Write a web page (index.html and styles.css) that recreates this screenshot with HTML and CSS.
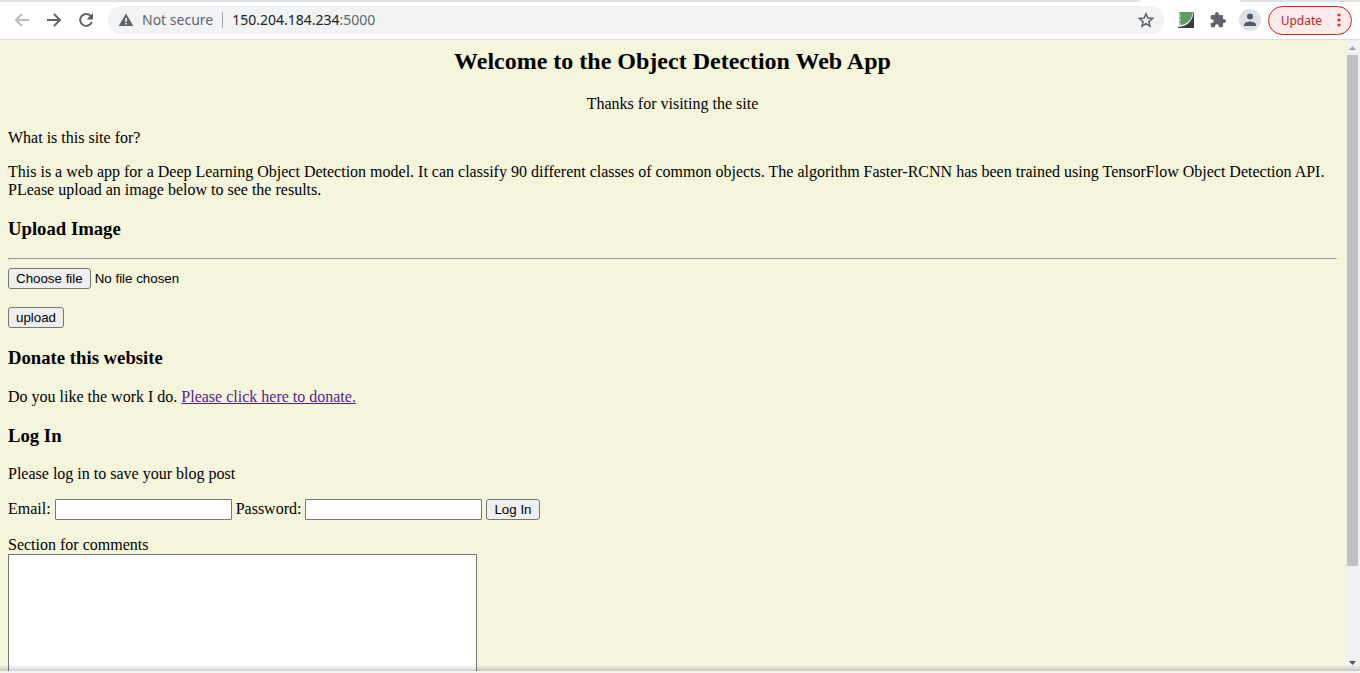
FILE: index.html
```html
<!DOCTYPE html>
<html lang="en">
<head>
<meta charset="utf-8">
<title>Object Detection Web App</title>
<link rel="stylesheet" href="styles.css">
</head>
<body>
<div class="tab-strip"><span class="tab-inactive tab-left"></span><span class="tab-active"></span><span class="tab-inactive tab-right"></span></div>
<header class="toolbar">
  <nav class="nav">
    <button class="icon-btn" aria-label="Back"><svg width="20" height="20" viewBox="0 0 20 20"><path d="M17 10H4M10 4l-6 6 6 6" fill="none" stroke="#babcbe" stroke-width="2"/></svg></button>
    <button class="icon-btn" aria-label="Forward"><svg width="20" height="20" viewBox="0 0 20 20"><path d="M3 10h13M10 4l6 6-6 6" fill="none" stroke="#5f6368" stroke-width="2"/></svg></button>
    <button class="icon-btn" aria-label="Reload"><svg width="20" height="20" viewBox="0 0 20 20"><path d="M15 6.3A6 6 0 1 0 15.800 12" fill="none" stroke="#5f6368" stroke-width="2"/><path d="M17 3v6.500h-6.500z" fill="#5f6368"/></svg></button>
  </nav>
  <div class="address">
    <svg width="16" height="16" viewBox="0 0 16 16"><path d="M8 1.500L15.300 14H.7z" fill="#5f6368"/><path d="M7.200 6h1.700v4H7.200zM7.200 11h1.700v1.600H7.200z" fill="#f1f3f4"/></svg>
    <span class="insecure">Not secure</span>
    <span class="divider"></span>
    <span class="url">150.204.184.234<span class="port">:5000</span></span>
    <button class="icon-btn star" aria-label="Bookmark"><svg width="16" height="16" viewBox="0 0 16 16"><path d="M8 1.800l1.800 4.300 4.700.4-3.550 3.100 1.050 4.600L8 11.750 4 14.200l1.050-4.600L1.500 6.500l4.700-.4z" fill="none" stroke="#5f6368" stroke-width="1.500"/></svg></button>
  </div>
  <button class="icon-btn ext" aria-label="Extension"><svg width="16" height="16" viewBox="0 0 16 16"><path d="M1 0h14C14 8 9 13 1 13.500z" fill="#639b65"/><path d="M0 2h2M0 4h3M0 6h2M0 8h3M0 10h2M0 12h3" stroke="#fff"/><path d="M16 0v16H0v-1C9 14.500 15 9 15.500 0z" fill="#3b3c3e"/></svg></button>
  <button class="icon-btn ext" aria-label="Extensions"><svg width="16" height="16" viewBox="1 1 22 22"><path d="M20.500 11H19V7c0-1.100-.9-2-2-2h-4V3.500a2.500 2.500 0 0 0-5 0V5H4c-1.100 0-2 .9-2 2v3.800h1.500a2.700 2.700 0 0 1 0 5.400H2V20c0 1.100.9 2 2 2h3.800v-1.500a2.700 2.700 0 0 1 5.400 0V22H17c1.100 0 2-.9 2-2v-4h1.500a2.500 2.500 0 0 0 0-5z" fill="#5f6368"/></svg></button>
  <button class="icon-btn avatar" aria-label="Profile"><svg width="22" height="22" viewBox="0 0 22 22"><circle cx="11" cy="7.500" r="3" fill="#4e5a70"/><path d="M5 17v-1.500c0-2 4-3.100 6-3.100s6 1.100 6 3.100V17z" fill="#4e5a70"/></svg></button>
  <button class="update">Update<svg width="4" height="14" viewBox="0 0 4 14"><circle cx="2" cy="2" r="1.600" fill="#d93025"/><circle cx="2" cy="7" r="1.600" fill="#d93025"/><circle cx="2" cy="12" r="1.600" fill="#d93025"/></svg></button>
</header>
<div class="view">
  <main class="page">
    <h2 class="title">Welcome to the Object Detection Web App</h2>
    <p class="center">Thanks for visiting the site</p>
    <p>What is this site for?</p>
    <p>This is a web app for a Deep Learning Object Detection model. It can classify 90 different classes of common objects. The algorithm Faster-RCNN has been trained using TensorFlow Object Detection API. PLease upload an image below to see the results.</p>
    <h3>Upload Image</h3>
    <hr>
    <form class="upload-form">
      <label class="picker"><span class="picker-btn">Choose file</span><span>No file chosen</span><input class="picker-input" type="file" name="image" aria-label="Choose file"></label>
      <button class="btn" type="button">upload</button>
    </form>
    <h3>Donate this website</h3>
    <p>Do you like the work I do. <a class="visited" href="#donate">Please click here to donate.</a></p>
    <h3>Log In</h3>
    <p>Please log in to save your blog post</p>
    <form class="login">
      <label for="email">Email:</label>
      <input class="field" id="email" type="text">
      <label for="password">Password:</label>
      <input class="field" id="password" type="password">
      <button class="btn" type="button">Log In</button>
    </form>
    <label class="comments-label" for="comments">Section for comments</label>
    <textarea class="comments" id="comments"></textarea>
  </main>
  <div class="scrollbar">
    <svg width="15" height="15" viewBox="0 0 15 15"><path d="M4 10l3.500-4 3.500 4z" fill="#a3a3a3"/></svg>
    <div class="track"><div class="thumb"></div></div>
    <svg width="15" height="15" viewBox="0 0 15 15"><path d="M4 5h7l-3.500 4z" fill="#505050"/></svg>
  </div>
</div>
<footer class="edge"></footer>
</body>
</html>
```
FILE: styles.css
```css
body {
  margin: 0;
  height: 100vh;
  display: flex;
  flex-direction: column;
  overflow: hidden;
  background: #fff;
  font-family: "Liberation Serif", serif;
  font-size: 16px;
  color: #000;
}

svg { display: block; flex: none; }

.tab-strip { display: flex; height: 2px; flex: none; }
.tab-inactive { background: #dee1e6; }
.tab-left { flex: 1; border-bottom-right-radius: 2px; }
.tab-active { width: 100px; }
.tab-right { width: 120px; border-bottom-left-radius: 2px; }

.toolbar {
  display: flex;
  align-items: center;
  flex: none;
  height: 36px;
  padding: 0 8px 1px 12px;
  border-bottom: 1px solid #dcdee1;
  font-family: "Noto Sans", sans-serif;
  font-size: 14px;
  color: #5f6368;
}
.icon-btn { padding: 0; border: 0; background: none; }
.nav { display: flex; gap: 12px; margin-right: 12px; }

.address {
  display: flex;
  align-items: center;
  flex: 1;
  height: 28px;
  padding: 0 10px;
  border-radius: 14px;
  background: #f1f3f4;
  line-height: 20px;
}
.insecure { margin: 0 9px 0 8px; }
.divider { width: 1px; height: 16px; margin-right: 9px; background: #9aa0a6; }
.url { color: #202124; }
.port { color: #5f6368; }
.star { margin-left: auto; }
.ext { margin-left: 16px; }
.address + .ext { margin-left: 14px; }

.avatar {
  margin: 0 7px 0 13px;
  border-radius: 50%;
  background: #dee1e6;
}
.update {
  display: flex;
  align-items: center;
  gap: 15px;
  box-sizing: border-box;
  height: 29px;
  padding: 0 10px 0 12px;
  border: 1px solid #c5221f;
  border-radius: 15px;
  background: #fcebea;
  color: #c5221f;
  font-family: inherit;
  font-size: 12px;
}

.view { display: flex; flex: 1; min-height: 0; }
.page {
  flex: 1;
  min-width: 0;
  overflow: hidden;
  padding: 8px;
  background: beige;
}
.title { margin: 0 0 20px; text-align: center; }
.center { text-align: center; }

.upload-form {
  display: flex;
  flex-direction: column;
  align-items: flex-start;
  gap: 18px;
}
.picker {
  position: relative;
  display: flex;
  align-items: center;
  gap: 4px;
  font: -webkit-small-control;
  font-family: "Liberation Sans", sans-serif;
}
.picker-input { position: absolute; inset: 0; width: 100%; opacity: 0; }
.picker-btn,
.btn {
  box-sizing: border-box;
  height: 21px;
  padding: 0 7px;
  border: 1px solid #767676;
  border-radius: 3px;
  background: #efefef;
  color: #000;
  font-family: "Liberation Sans", sans-serif;
  line-height: 19px;
}
.visited { color: #551a8b; }

.login { margin-bottom: 16px; }
.field {
  box-sizing: border-box;
  width: 177px;
  height: 21px;
  padding: 1px 2px;
  border: 1px solid #767676;
  border-radius: 1px;
  background: #fff;
}
.comments-label { display: block; }
.comments {
  display: block;
  box-sizing: border-box;
  width: 469px;
  height: 200px;
  border: 1px solid #767676;
  background: #fff;
  resize: none;
}

.scrollbar {
  display: flex;
  flex-direction: column;
  width: 15px;
  background: #f1f1f1;
}
.track { flex: 1; padding: 0 2px; }
.thumb { height: 85%; background: #c1c1c1; }

.edge {
  position: relative;
  flex: none;
  height: 2px;
  background: #f6f4ee;
}
.edge::before {
  content: "";
  position: absolute;
  inset: -6px 0 auto;
  height: 6px;
  background: linear-gradient(transparent, rgba(0, 0, 0, 0.18));
}
```
